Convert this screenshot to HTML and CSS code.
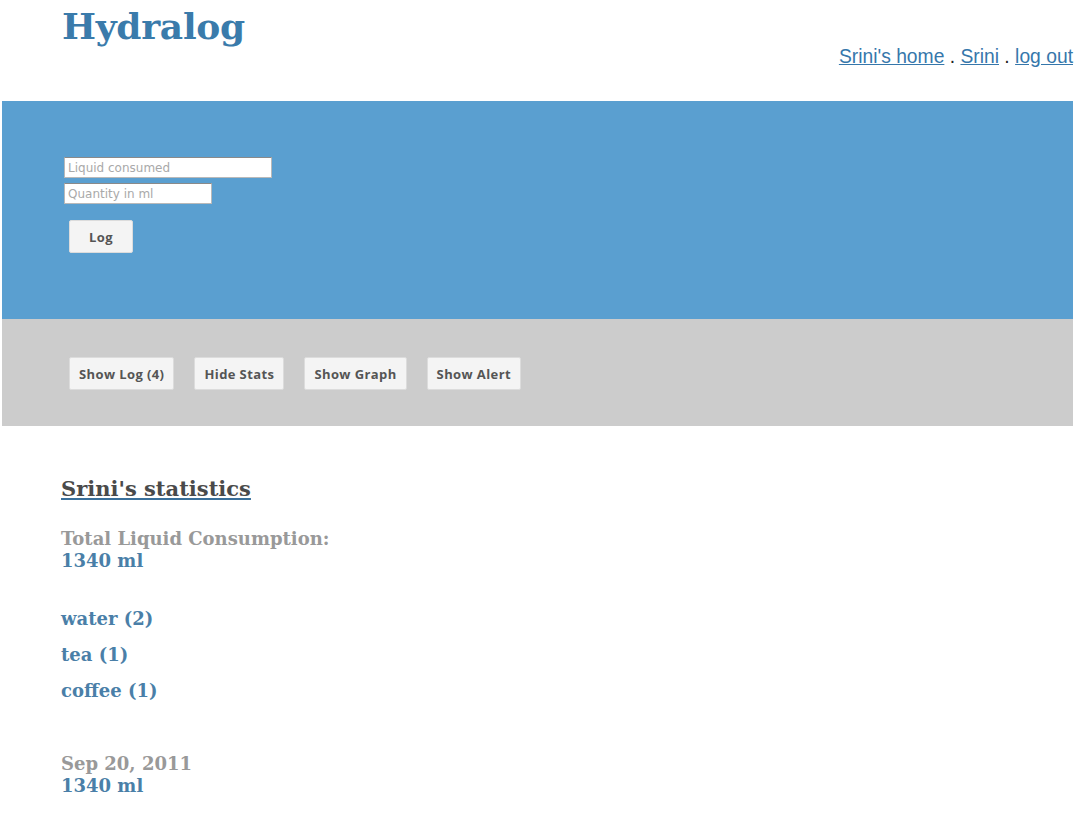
FILE: index.html
```html
<!DOCTYPE html>
<html>
<head>
<meta charset="utf-8">
<title>Hydralog</title>
<link rel="stylesheet" href="styles.css">
</head>
<body>
<div class="page">
  <header class="top">
    <h1 class="brand">Hydralog</h1>
    <nav class="usernav"><a href="#">Srini's home</a> . <a href="#">Srini</a> . <a href="#">log out</a></nav>
  </header>
  <section class="entry">
    <form class="entry-form">
      <input class="field field-wide" type="text" placeholder="Liquid consumed">
      <input class="field field-narrow" type="text" placeholder="Quantity in ml">
      <button class="btn btn-log" type="button">Log</button>
    </form>
  </section>
  <section class="toolbar">
    <button class="btn" type="button">Show Log (4)</button>
    <button class="btn" type="button">Hide Stats</button>
    <button class="btn" type="button">Show Graph</button>
    <button class="btn" type="button">Show Alert</button>
  </section>
  <section class="stats">
    <h2 class="stats-title">Srini's statistics</h2>
    <div class="stat-block">
      <div class="stat-label">Total Liquid Consumption:</div>
      <div class="stat-value">1340 ml</div>
    </div>
    <ul class="kinds">
      <li>water (2)</li>
      <li>tea (1)</li>
      <li>coffee (1)</li>
    </ul>
    <div class="stat-block day">
      <div class="stat-label">Sep 20, 2011</div>
      <div class="stat-value">1340 ml</div>
    </div>
  </section>
</div>
</body>
</html>
```

FILE: styles.css
```css
html, body {
  margin: 0;
  padding: 0;
  background: #ffffff;
}
.page {
  margin: 0 6px 0 2px;
  font-family: "DejaVu Serif", Georgia, serif;
}
.top {
  display: flex;
  justify-content: space-between;
  align-items: flex-start;
  height: 101px;
}
.brand {
  margin: 4px 0 0 60px;
  font-size: 36px;
  font-weight: bold;
  color: #3a7bab;
  line-height: 44px;
  letter-spacing: -0.3px;
}
.usernav {
  margin-top: 46px;
  font-family: "Liberation Sans", Arial, sans-serif;
  font-size: 19.3px;
  line-height: 22px;
  color: #222;
}
.usernav a {
  color: #3677ab;
}
.entry {
  background: #5a9fd0;
  height: 218px;
  padding: 56px 0 0 62px;
  box-sizing: border-box;
}
.entry-form {
  display: flex;
  flex-direction: column;
  align-items: flex-start;
  gap: 5px;
}
.field {
  height: 21px;
  box-sizing: border-box;
  border: 1px solid #b9b9b9;
  border-top-color: #8a8a8a;
  margin: 0;
  padding: 1px 3px;
  font-family: "DejaVu Sans", "Lucida Grande", sans-serif;
  font-size: 12px;
  background: #fff;
}
.field::placeholder {
  color: #a9a9a9;
}
.field-wide { width: 208px; }
.field-narrow { width: 148px; }
.btn {
  font-family: "Open Sans", "Lucida Grande", sans-serif;
  font-weight: bold;
  font-size: 13px;
  letter-spacing: 0.4px;
  color: #555;
  background: #f4f4f4;
  border: 1px solid #dcdcdc;
  border-radius: 2px;
  height: 33px;
  padding: 0 9px;
  margin: 0;
}
.btn-log {
  margin: 11px 0 0 5px;
  width: 64px;
}
.toolbar {
  background: #cccccc;
  height: 107px;
  box-sizing: border-box;
  padding: 38px 0 0 67px;
  display: flex;
  align-items: flex-start;
  gap: 20px;
}
.stats {
  padding: 50px 0 30px 59px;
}
.stats-title {
  margin: 0 0 26px 0;
  font-size: 21px;
  line-height: 26px;
  color: #4a4a4a;
  text-decoration: underline;
  text-decoration-color: #3a6f9a;
}
.stat-label {
  font-size: 18px;
  font-weight: bold;
  line-height: 22px;
  color: #999999;
}
.stat-value {
  font-size: 18px;
  font-weight: bold;
  line-height: 22px;
  color: #4a7fa8;
}
.kinds {
  list-style: none;
  margin: 36px 0 0 0;
  padding: 0;
}
.kinds li {
  font-size: 18px;
  font-weight: bold;
  line-height: 22px;
  color: #4a7fa8;
  margin-bottom: 14px;
}
.day {
  margin-top: 51px;
}
```
